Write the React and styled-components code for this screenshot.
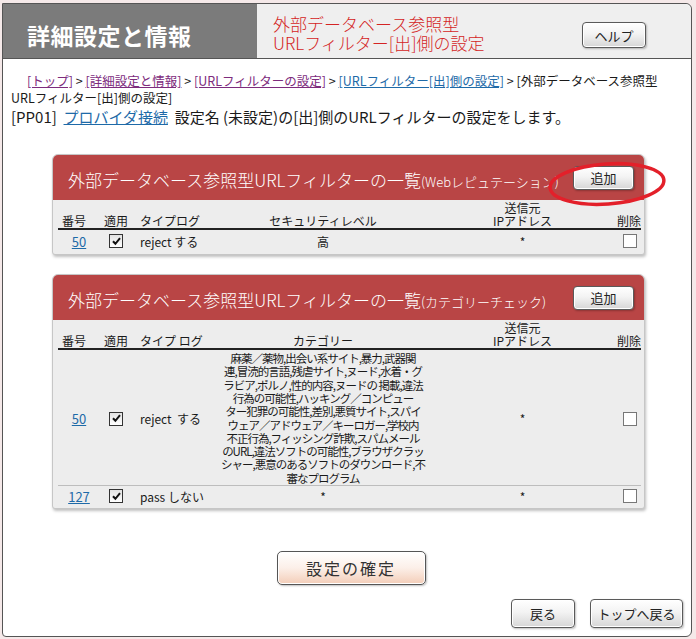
import styled, { createGlobalStyle } from 'styled-components'

const GlobalStyle = createGlobalStyle`
  body {
    margin: 0;
    background: #f5e9e9;
    font-family: "Noto Sans CJK JP", "Noto Sans", sans-serif;
    color: #1a1a1a;
  }
`

const categories = [
  '麻薬／薬物,出会い系サイト,暴力,武器関',
  '連,冒涜的言語,残虐サイト,ヌード,水着・グ',
  'ラビア,ポルノ,性的内容,ヌードの 掲載,違法',
  '行為の可能性,ハッキング／コンピュー',
  'ター犯罪の可能性,差別,悪質サイト,スパイ',
  'ウェア／アドウェア／キーロガー,学校内',
  '不正行為,フィッシング詐欺,スパムメール',
  'のURL,違法ソフトの可能性,ブラウザクラッ',
  'シャー,悪意のあるソフトのダウンロード,不',
  '審なプログラム'
]

function CheckBox({ checked }) {
  return (
    <Box $checked={checked}>
      {checked && (
        <svg width="11" height="11" viewBox="0 0 11 11">
          <path d="M2 5.2 L4.4 7.8 L9 2.2" fill="none" stroke="#111" strokeWidth="2" />
        </svg>
      )}
    </Box>
  )
}

export default function App() {
  return (
    <>
      <GlobalStyle />
      <Frame>
        <Header>
          <PageTitle>詳細設定と情報</PageTitle>
          <SubTitle>
            <span>外部データベース参照型</span>
            <span>URLフィルター[出]側の設定</span>
          </SubTitle>
          <Button $w={64} $h={26} $top={18}>ヘルプ</Button>
        </Header>

        <Content>
          <Breadcrumb>
            <Crumb $visited>[トップ]</Crumb> &gt; <Crumb $visited>[詳細設定と情報]</Crumb> &gt;{' '}
            <Crumb $visited>[URLフィルターの設定]</Crumb> &gt; <Crumb>[URLフィルター[出]側の設定]</Crumb> &gt;
            [外部データベース参照型
            <br />
            URLフィルター[出]側の設定]
          </Breadcrumb>
          <Intro>
            [PP01]&nbsp; <Crumb>プロバイダ接続</Crumb>&nbsp; 設定名 (未設定)の[出]側のURLフィルターの設定をします。
          </Intro>

          <Panel $top={28}>
            <PanelHead>
              <PanelTitle>
                外部データベース参照型URLフィルターの一覧<small>(Webレピュテーション)</small>
              </PanelTitle>
              <Button $w={61} $h={24}>追加</Button>
            </PanelHead>
            <HeadRow>
              <Cell $align="left">番号</Cell>
              <Cell>適用</Cell>
              <Cell $align="left">タイプログ</Cell>
              <Cell>セキュリティレベル</Cell>
              <Cell $shift>
                <span>送信元</span>
                <span>IPアドレス</span>
              </Cell>
              <Cell $align="right">削除</Cell>
            </HeadRow>
            <Row $h={22}>
              <Cell><Num>50</Num></Cell>
              <Cell><CheckBox checked /></Cell>
              <Cell $align="left">reject する</Cell>
              <Cell>高</Cell>
              <Cell $shift>*</Cell>
              <Cell $align="right"><CheckBox /></Cell>
            </Row>
            <Annotation width="130" height="56" viewBox="0 0 130 56">
              <ellipse cx="64" cy="27" rx="57" ry="20" fill="none" stroke="#e3202a" strokeWidth="3.5" transform="rotate(-4 64 27)" />
            </Annotation>
          </Panel>

          <Panel $top={19}>
            <PanelHead>
              <PanelTitle>
                外部データベース参照型URLフィルターの一覧<small>(カテゴリーチェック)</small>
              </PanelTitle>
              <Button $w={61} $h={24}>追加</Button>
            </PanelHead>
            <HeadRow>
              <Cell $align="left">番号</Cell>
              <Cell>適用</Cell>
              <Cell $align="left">タイプ ログ</Cell>
              <Cell>カテゴリー</Cell>
              <Cell $shift>
                <span>送信元</span>
                <span>IPアドレス</span>
              </Cell>
              <Cell $align="right">削除</Cell>
            </HeadRow>
            <Row $h={133} $divider>
              <Cell><Num>50</Num></Cell>
              <Cell><CheckBox checked /></Cell>
              <Cell $align="left">reject&nbsp; する</Cell>
              <Cell>
                <Categories>
                  {categories.map(line => (
                    <span key={line}>{line}</span>
                  ))}
                </Categories>
              </Cell>
              <Cell $shift>*</Cell>
              <Cell $align="right"><CheckBox /></Cell>
            </Row>
            <Row $h={20}>
              <Cell><Num>127</Num></Cell>
              <Cell><CheckBox checked /></Cell>
              <Cell $align="left">pass しない</Cell>
              <Cell>*</Cell>
              <Cell $shift>*</Cell>
              <Cell $align="right"><CheckBox /></Cell>
            </Row>
          </Panel>

          <ConfirmButton>設定の確定</ConfirmButton>

          <Nav>
            <Button $w={64} $h={29}>戻る</Button>
            <Button $w={93} $h={29}>トップへ戻る</Button>
          </Nav>
        </Content>
      </Frame>
    </>
  )
}

const Frame = styled.div`
  box-sizing: border-box;
  margin: 3px 0 0 2px;
  width: 690px;
  height: 634px;
  background: #fff;
  border: 1px solid #555;
  border-radius: 0 6px 6px 4px;
  display: flex;
  flex-direction: column;
`

const Header = styled.header`
  display: flex;
  align-items: flex-start;
  height: 54px;
  flex-shrink: 0;
  background: #efefef;
  border-bottom: 1px solid #555;
  border-top-right-radius: 6px;
`

const PageTitle = styled.h1`
  box-sizing: border-box;
  margin: 0;
  width: 254px;
  height: 100%;
  padding: 8px 0 0 24px;
  display: flex;
  align-items: center;
  background: #7b7b7b;
  color: #fff;
  font-size: 23px;
  font-weight: bold;
  letter-spacing: 0.5px;
`

const SubTitle = styled.div`
  flex: 1;
  display: flex;
  flex-direction: column;
  padding: 10px 0 0 16px;
  color: #d42424;
  font-size: 17px;
  font-weight: 300;
  line-height: 19px;

  span {
    height: 19px;
  }
`

const Button = styled.button`
  box-sizing: border-box;
  flex-shrink: 0;
  width: ${p => p.$w}px;
  height: ${p => p.$h}px;
  margin: ${p => (p.$top ? `${p.$top}px 45px 0 0` : '0')};
  padding: 0;
  font-family: inherit;
  font-size: 13px;
  color: #222;
  border: 1px solid #5a5a5a;
  border-radius: 4px;
  background: linear-gradient(#ffffff 0%, #f3f3f3 45%, #d6d6d6 100%);
  box-shadow: inset 0 0 0 1px #fff, 1px 1px 2px rgba(0, 0, 0, 0.25);
`

const Content = styled.main`
  flex: 1;
  display: flex;
  flex-direction: column;
  padding: 13px 8px 8px 8px;
`

const Breadcrumb = styled.p`
  margin: 0;
  font-size: 12.5px;
  line-height: 17px;
  text-indent: 16px;
  white-space: nowrap;
`

const Crumb = styled.a`
  color: ${p => (p.$visited ? '#7d2b7d' : '#1e6aa8')};
  text-decoration: underline;
  cursor: pointer;
`

const Intro = styled.p`
  margin: 2px 0 0;
  font-size: 15px;
  line-height: 18px;
  white-space: nowrap;
`

const Panel = styled.section`
  position: relative;
  box-sizing: border-box;
  width: 593px;
  margin: ${p => p.$top}px 0 0 41px;
  padding-bottom: 2px;
  background: #ededed;
  border: 1px solid #c6c6c6;
  border-radius: 6px 6px 3px 3px;
  box-shadow: 1px 2px 3px rgba(0, 0, 0, 0.25);
`

const PanelHead = styled.div`
  display: flex;
  align-items: center;
  justify-content: space-between;
  height: 45px;
  padding: 0 10px 0 15px;
  background: #b94545;
  border-radius: 5px 5px 0 0;
`

const PanelTitle = styled.h2`
  margin: 4px 0 0;
  font-size: 17px;
  font-weight: 300;
  color: #fff;

  small {
    font-size: 13px;
  }
`

const grid = `
  display: grid;
  grid-template-columns: 38px 40px 92px 190px 1fr 34px;
  margin: 0 3px 0 5px;
  font-size: 12px;
`

const HeadRow = styled.div`
  ${grid}
  height: 27px;
  align-items: end;
  line-height: 13px;
  padding-bottom: 1px;
  border-bottom: 2px solid #222;
`

const Row = styled.div`
  ${grid}
  min-height: ${p => p.$h}px;
  align-items: center;
  border-bottom: ${p => (p.$divider ? '1px solid #bdbdbd' : 'none')};
  margin-top: ${p => (p.$divider ? '2px' : '0')};
`

const Cell = styled.div`
  display: flex;
  flex-direction: column;
  align-items: ${p => (p.$align === 'left' ? 'flex-start' : p.$align === 'right' ? 'flex-end' : 'center')};
  text-align: ${p => p.$align || 'center'};
  padding-left: ${p => (p.$shift ? '20px' : p.$align === 'left' ? '4px' : '0')};
  white-space: nowrap;
`

const Num = styled.a`
  color: #1e6aa8;
  text-decoration: underline;
  font-size: 13px;
  margin-left: 4px;
`

const Box = styled.span`
  box-sizing: border-box;
  display: inline-flex;
  align-items: center;
  justify-content: center;
  width: 14px;
  height: 14px;
  margin-right: ${p => (p.$checked ? '0' : '4px')};
  border: 1px solid ${p => (p.$checked ? '#333' : '#777')};
  background: ${p => (p.$checked ? 'linear-gradient(#e2e2e2, #fff)' : '#fff')};
`

const Categories = styled.div`
  display: flex;
  flex-direction: column;
  align-items: center;
  font-size: 11.5px;
  line-height: 13.3px;
  letter-spacing: -1px;
`

const Annotation = styled.svg`
  position: absolute;
  left: 490px;
  top: 2px;
  overflow: visible;
  pointer-events: none;
`

const ConfirmButton = styled.button`
  box-sizing: border-box;
  align-self: center;
  width: 149px;
  height: 34px;
  margin: 42px 0 0 8px;
  padding: 0;
  font-family: inherit;
  font-size: 16px;
  letter-spacing: 2px;
  color: #333;
  border: 1px solid #555;
  border-radius: 5px;
  background: linear-gradient(#ffffff 0%, #fcefe8 50%, #f3cdb8 100%);
  box-shadow: inset 0 0 0 1px #fff, 1px 1px 2px rgba(0, 0, 0, 0.25);
`

const Nav = styled.nav`
  display: flex;
  justify-content: flex-end;
  gap: 15px;
  margin-top: auto;
`
